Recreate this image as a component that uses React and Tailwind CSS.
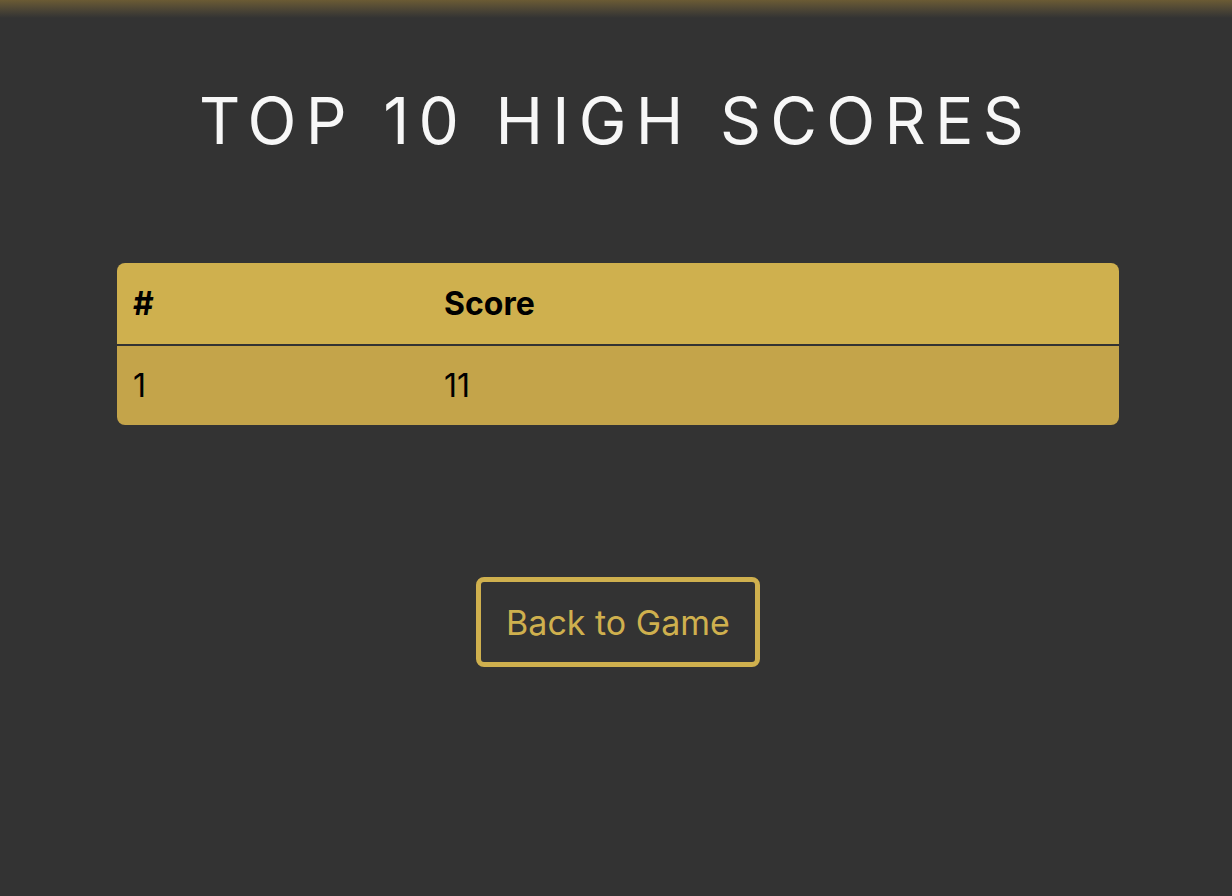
import React from 'react';

const scores = [{ rank: 1, score: 11 }];

const App = () => {
  return (
    <div className="min-h-screen bg-[#333333] font-['Inter',sans-serif] relative">
      <div className="absolute top-0 left-0 right-0 h-[18px] bg-gradient-to-b from-[#6b5b34] to-[#333333]"></div>
      <div className="relative flex flex-col items-center pt-[89px] pl-1">
        <h1 className="text-[64px] font-normal tracking-[0.145em] text-[#f7f7f7] leading-none pr-[4px]">
          TOP 10 HIGH SCORES
        </h1>

        <div className="mt-[110px] w-[1002px] rounded-lg overflow-hidden">
          <table className="w-full text-left text-black text-[32px]">
            <thead>
              <tr className="bg-[#cfb04e] border-b-2 border-[#333333]">
                <th className="w-[327px] h-[82px] pl-4 font-bold">#</th>
                <th className="h-[82px] font-bold">Score</th>
              </tr>
            </thead>
            <tbody>
              {scores.map(row => (
                <tr key={row.rank} className="bg-[#c4a44a]">
                  <td className="h-[80px] pl-4">{row.rank}</td>
                  <td className="h-[80px]">{row.score}</td>
                </tr>
              ))}
            </tbody>
          </table>
        </div>

        <button className="mt-[152px] px-[25px] h-[90px] border-[5px] border-[#cfb04e] rounded-lg text-[#cfb04e] text-[34px]">
          Back to Game
        </button>
      </div>
    </div>
  );
};

export default App;
